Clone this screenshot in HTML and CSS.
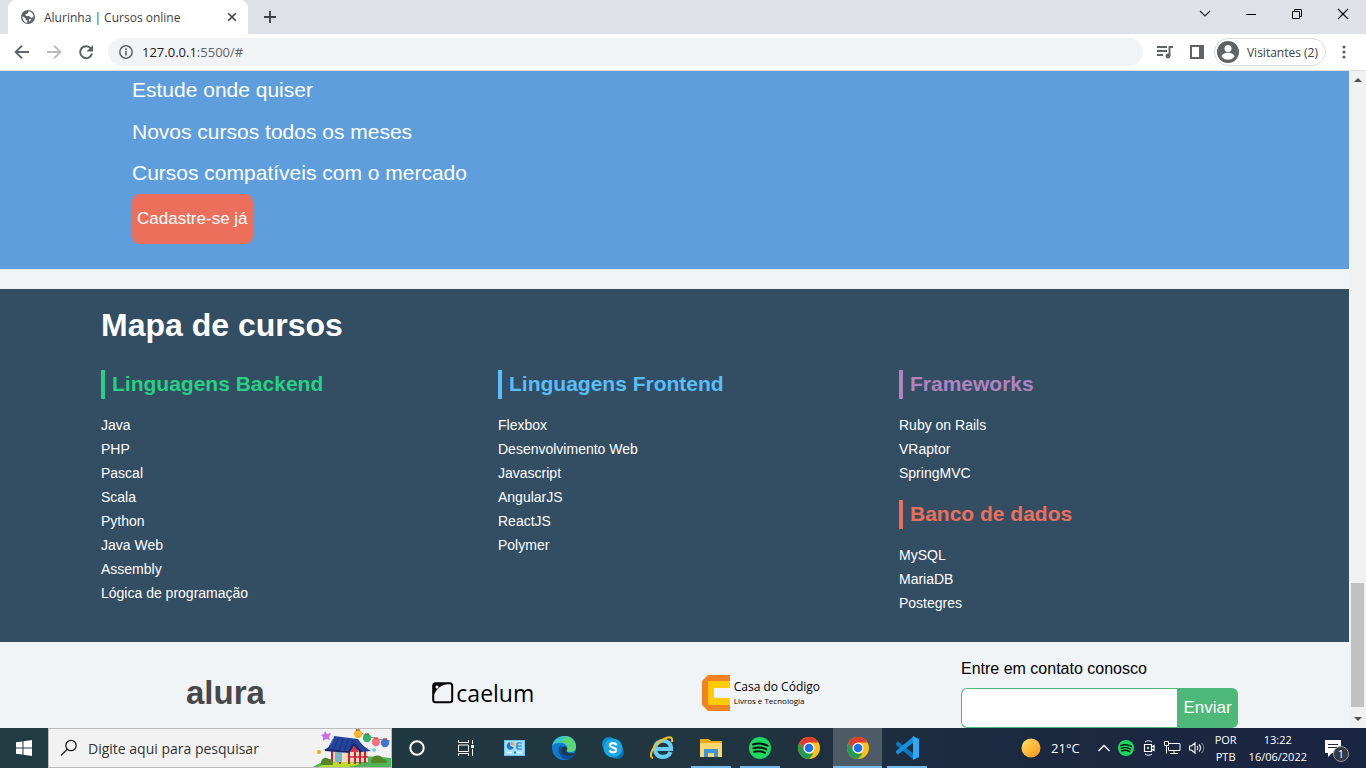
FILE: index.html
```html
<!DOCTYPE html>
<html lang="pt-br">
<head>
<meta charset="utf-8">
<meta name="viewport" content="width=device-width, initial-scale=1">
<title>Alurinha | Cursos online</title>
<link rel="stylesheet" href="styles.css">
</head>
<body class="desktop">
<header class="browser">
  <div class="tabstrip">
    <div class="tab">
      <svg class="tab-icon" width="16" height="16" viewBox="0 0 16 16"><circle cx="8" cy="8" r="7" fill="#5f6368"/><path d="M2.400 7.200 5.600 9.300v1.500l1.700 1v2C4.500 13.500 2.300 11 2.400 7.200zM8.600 2.200l-1 2.300-2 .8.2 1.700h3.300l1.500 1.600 1.700.2 1.300-1.500C13.400 4.600 11.400 2.500 8.600 2.200zM9.700 9.800l-1 1.400.8 1.200 1.900-1.600z" fill="#fff"/></svg>
      <span class="tab-title">Alurinha | Cursos online</span>
      <button class="icon-btn tab-close" aria-label="Fechar guia"><svg width="10" height="10" viewBox="0 0 10 10"><path d="M1.200 1.200l7.600 7.600M8.800 1.200 1.200 8.800" stroke="#3c4043" stroke-width="1.600"/></svg></button>
    </div>
    <button class="icon-btn new-tab" aria-label="Nova guia"><svg width="14" height="14" viewBox="0 0 14 14"><path d="M7 1v12M1 7h12" stroke="#3c4043" stroke-width="1.800"/></svg></button>
    <div class="window-buttons">
      <button class="icon-btn window-btn" aria-label="Pesquisar guias"><svg width="12" height="12" viewBox="0 0 12 12"><path d="M1 3l5 5 5-5" fill="none" stroke="#222" stroke-width="1.100"/></svg></button>
      <button class="icon-btn window-btn" aria-label="Minimizar"><svg width="12" height="12" viewBox="0 0 12 12"><path d="M1 6.500h10" stroke="#000"/></svg></button>
      <button class="icon-btn window-btn" aria-label="Restaurar"><svg width="12" height="12" viewBox="0 0 12 12"><path d="M1.500 3.500h7v7h-7zM3.500 3.500v-2h7v7h-2" fill="none" stroke="#000"/></svg></button>
      <button class="icon-btn window-btn" aria-label="Fechar"><svg width="12" height="12" viewBox="0 0 12 12"><path d="M1 1l10 10M11 1 1 11" stroke="#000" stroke-width="1.100"/></svg></button>
    </div>
  </div>
  <div class="toolbar">
    <button class="icon-btn" aria-label="Voltar"><svg width="16" height="16" viewBox="0 0 16 16"><path d="M15 8H2M8 1.600 1.600 8 8 14.400" fill="none" stroke="#5f6368" stroke-width="1.900"/></svg></button>
    <button class="icon-btn" aria-label="Avançar"><svg width="16" height="16" viewBox="0 0 16 16"><path d="M1 8h13M8 1.600 14.400 8 8 14.400" fill="none" stroke="#bababc" stroke-width="1.900"/></svg></button>
    <button class="icon-btn" aria-label="Atualizar"><svg width="16" height="16" viewBox="0 0 16 16"><path d="M13 4.600A6 6 0 1 0 14 9.500" fill="none" stroke="#5f6368" stroke-width="2"/><path d="M15 1v6.500H8.500z" fill="#5f6368"/></svg></button>
    <label class="address">
      <svg width="16" height="16" viewBox="0 0 16 16"><circle cx="8" cy="8" r="6.200" fill="none" stroke="#5f6368" stroke-width="1.500"/><path d="M8 7v4.500M8 4.300v1.700" stroke="#5f6368" stroke-width="1.600"/></svg>
      <span class="url">127.0.0.1<span class="url-rest">:5500/#</span></span>
    </label>
    <button class="icon-btn media" aria-label="Controles de mídia"><svg width="18" height="16" viewBox="0 0 18 16"><path d="M1 3h10M1 7h10M1 11h6" stroke="#5f6368" stroke-width="1.800"/><path d="M13.500 12V3h3.500" fill="none" stroke="#5f6368" stroke-width="1.900"/><circle cx="12" cy="12" r="2.400" fill="#5f6368"/></svg></button>
    <button class="icon-btn panel" aria-label="Painel lateral"><svg width="14" height="14" viewBox="0 0 14 14"><path d="M1 1h12v12H1z" fill="none" stroke="#5f6368" stroke-width="2"/><path d="M9 1h4v12H9z" fill="#5f6368"/></svg></button>
    <button class="profile"><svg width="22" height="22" viewBox="0 0 22 22"><circle cx="11" cy="11" r="11" fill="#5f6368"/><circle cx="11" cy="7.500" r="3.500" fill="#fff"/><path d="M4.500 15.500c1-5 12-5 13 0-3 4.300-10 4.300-13 0z" fill="#fff"/></svg><span>Visitantes (2)</span></button>
    <button class="icon-btn" aria-label="Menu"><svg width="4" height="14" viewBox="0 0 4 14"><g fill="#5f6368"><circle cx="2" cy="2" r="1.600"/><circle cx="2" cy="7" r="1.600"/><circle cx="2" cy="12" r="1.600"/></g></svg></button>
  </div>
</header>

<div class="viewport">
  <main class="page">
    <section class="hero">
      <ul class="benefits">
        <li>Estude onde quiser</li>
        <li>Novos cursos todos os meses</li>
        <li>Cursos compatíveis com o mercado</li>
      </ul>
      <button class="signup">Cadastre-se já</button>
    </section>
    <section class="map">
      <h1 class="map-title">Mapa de cursos</h1>
      <div class="map-columns">
        <div>
          <h2 class="category backend">Linguagens Backend</h2>
          <ul class="courses">
            <li><a href="#">Java</a></li><li><a href="#">PHP</a></li><li><a href="#">Pascal</a></li><li><a href="#">Scala</a></li><li><a href="#">Python</a></li><li><a href="#">Java Web</a></li><li><a href="#">Assembly</a></li><li><a href="#">Lógica de programação</a></li>
          </ul>
        </div>
        <div>
          <h2 class="category frontend">Linguagens Frontend</h2>
          <ul class="courses">
            <li><a href="#">Flexbox</a></li><li><a href="#">Desenvolvimento Web</a></li><li><a href="#">Javascript</a></li><li><a href="#">AngularJS</a></li><li><a href="#">ReactJS</a></li><li><a href="#">Polymer</a></li>
          </ul>
        </div>
        <div>
          <h2 class="category frameworks">Frameworks</h2>
          <ul class="courses">
            <li><a href="#">Ruby on Rails</a></li><li><a href="#">VRaptor</a></li><li><a href="#">SpringMVC</a></li>
          </ul>
          <h2 class="category database">Banco de dados</h2>
          <ul class="courses">
            <li><a href="#">MySQL</a></li><li><a href="#">MariaDB</a></li><li><a href="#">Postegres</a></li>
          </ul>
        </div>
      </div>
    </section>
    <footer class="footer">
      <nav class="partners">
        <a class="alura" href="#">alura</a>
        <a class="caelum" href="#"><svg width="22" height="22" viewBox="0 0 22 22"><rect x="1.200" y="1.200" width="19" height="19" rx="2.500" fill="none" stroke="#000" stroke-width="2"/><path d="M1.500 15C3 8 8 2.500 19 1.500H2z"/><circle cx="5" cy="5" r="1.500" fill="#fff"/></svg><span>caelum</span></a>
        <a class="casa" href="#"><svg width="28" height="36" viewBox="0 0 28 36"><path d="M6 0h22v36H6l-6-6V6z" fill="#f58220"/><path d="M6 6h22v24H6z" fill="#ffcb05"/><path d="M12 13h16v10H12z" fill="#f1f4f7"/></svg><span class="casa-text"><span class="casa-name">Casa do Código</span><span class="casa-sub">Livros e Tecnologia</span></span></a>
      </nav>
      <form class="contact">
        <label for="email">Entre em contato conosco</label>
        <div class="contact-row"><input id="email" type="email"><button type="button">Enviar</button></div>
      </form>
    </footer>
  </main>
  <div class="scrollbar" aria-hidden="true">
    <svg width="17" height="17" viewBox="0 0 17 17"><path d="M5 11h8L9 7z" fill="#505050"/></svg>
    <div class="track"><div class="thumb"></div></div>
    <svg width="17" height="17" viewBox="0 0 17 17"><path d="M5 6h8l-4 4z" fill="#505050"/></svg>
  </div>
</div>

<div class="taskbar">
  <button class="task start" aria-label="Iniciar"><svg width="16" height="16" viewBox="0 0 16 16"><path d="M0 2.300 6.500 1.400V7.500H0zM7.500 1.200 16 0v7.500H7.500zM0 8.500h6.500v6.100L0 13.700zM7.500 8.500H16V16l-8.500-1.200z" fill="#fff"/></svg></button>
  <label class="search">
    <svg class="search-icon" width="18" height="18" viewBox="0 0 18 18"><circle cx="11" cy="6.500" r="5.200" fill="none" stroke="#222" stroke-width="1.300"/><path d="M7.300 10.200 1 16.500" stroke="#222" stroke-width="1.300"/></svg>
    <input type="text" placeholder="Digite aqui para pesquisar" aria-label="Pesquisar">
    <svg class="search-art" width="78" height="38" viewBox="0 0 78 38">
      <path d="M0 38c10-6 18-9 29-8 14-4 30-3 49-1v9z" fill="#4fb457"/><path d="M5 38c10-5 30-7 43-3l-12 3z" fill="#b7dd2b"/>
      <path d="M12 2l2 3 4-1-2 4 1 3-4-1-3 2 0-4-2-2 3-1z" fill="#ca70ee"/>
      <path d="M19 18h36v15H19z" fill="#f7d6bd"/><path d="M19 17v17M27 17v18M36 17v18M42 17v18M47 20v15M52 19v15M19 20h35" stroke="#c6213a" stroke-width="2"/><path d="M22 23h7v10h-7z" fill="#73b8cb"/>
      <path d="M37 28h18" stroke="#c6213a" stroke-width="1.500"/>
      <path d="M11 21c6-3 9-8 10-14l24 3c3 5 7 9 13 12l-10 1-7-6-4 5z" fill="#24439a"/><path d="M12 21l24 2 5-8 7 8" fill="none" stroke="#182968" stroke-width="2"/><path d="M20 10l-5 10M25 10l-5 11M30 10l-4 12M35 11l-4 11M40 11l-4 11" stroke="#18307a" stroke-width=".8"/><path d="M37 23l4-6 5 6z" fill="#dd3648"/>
      <path d="M8 34c0-4 4-7 8-4 3 0 4 3 4 6H8zM58 33c0-8 11-8 12-3 3 0 4 2 4 4H58z" fill="#55852b"/>
      <path d="M43 0c9 8 20 10 34 12" fill="none" stroke="#888" stroke-width="1"/><circle cx="45" cy="5" r="4.200" fill="#ffb52e"/><circle cx="54" cy="9" r="4.200" fill="#2db36c"/><circle cx="63" cy="13" r="4.200" fill="#f5727d"/><circle cx="72" cy="14" r="4.200" fill="#3c77cf"/><path d="M43 1h4M52 5h4M61 9h4M70 10h4" stroke="#b12931" stroke-width="1.200"/><circle cx="6" cy="23" r="2" fill="#ffa800"/><circle cx="61" cy="21" r="2" fill="#6cd1ee"/>
    </svg>
  </label>
  <div class="apps">
    <button class="task" aria-label="Cortana"><svg width="16" height="16" viewBox="0 0 16 16"><circle cx="8" cy="8" r="6.700" fill="none" stroke="#fff" stroke-width="2"/></svg></button>
    <button class="task" aria-label="Visão de tarefas"><svg width="16" height="16" viewBox="0 0 16 16"><path d="M.5 0v2.500h10V0M.5 16v-2.500h10V16M.5 5h10v6.500H.5zM14.500 0v4M14.500 9v7" fill="none" stroke="#fff"/><path d="M13 5h3v3h-3z" fill="#fff"/></svg></button>
    <button class="task" aria-label="Painel"><svg width="21" height="16" viewBox="0 0 21 16"><path d="M0 0h21v16H0z" fill="#6fc7f4"/><path d="M1 1h19v14H1z" fill="#a3def9"/><circle cx="6.500" cy="6" r="3.600" fill="#fff"/><path d="M6.500 6V2.300A3.700 3.700 0 1 0 10 7z" fill="#1e78c8"/><path d="M7 5.500V2a3.500 3.500 0 0 1 3.300 3.500z" fill="#f4a024"/><path d="M13 3h5M13 6h5M13 9h5M13 3v6" stroke="#187ac5" stroke-width="1.200"/><path d="M3 12.500h5M13 12.500h5" stroke="#e9f8ff" stroke-width="1.500"/><path d="M10 11.500h2v2h-2z" fill="#187ac5"/></svg></button>
    <button class="task" aria-label="Edge"><svg width="24" height="24" viewBox="0 0 24 24"><circle cx="12" cy="12" r="12" fill="#127bd1"/><path d="M.2 10C2-3 23-4 24 10c.3 6-5 7-9 5.500-1-.6 1-1.500.5-4C14 6 4 5 .2 10z" fill="#38c6d2"/><path d="M14 .3C21 1 24 7 24 10.500c0 5.500-6 6-9 4.800-1-.6 1-1.500.5-4C15 8 11 6 8 6z" fill="#59d477"/><path d="M9 9C4 12 7 24 16 23.300c3-.8 5.500-3 6.500-5.300C17 20 8.500 18 9 11z" fill="#0b4e9c"/><path d="M10 11c-2 3 0 8 5 8.500 4 .5 7-1 7.500-1.500 1-1.300.5-1.500-.5-1-3 1-6 .5-8-2 3-1.500 0-6-4-4z" fill="#203740"/></svg></button>
    <button class="task" aria-label="Skype"><svg width="22" height="22" viewBox="0 0 22 22"><circle cx="7" cy="7" r="7" fill="#0a8bd3"/><circle cx="15" cy="15" r="7" fill="#0871b9"/><circle cx="11" cy="11" r="9.500" fill="#18a6e5"/><path d="M14.300 8.300c-.8-3-6.500-2.600-6.400 0 .1 3 6.500 1.700 6.300 4.900-.2 2.700-6 2.800-6.600-.2" fill="none" stroke="#fff" stroke-width="2.200"/></svg></button>
    <button class="task" aria-label="Internet Explorer"><svg width="24" height="24" viewBox="0 0 24 24"><path d="M5 13h16c.5-11-16-11-16 0 0 10 13 10 15.500 3" fill="none" stroke="#66ccf8" stroke-width="4.200"/><path d="M3 22c-6-2 2-15 11-19 6-3 9-2 8 3" fill="none" stroke="#f3c226" stroke-width="2"/></svg></button>
    <button class="task open" aria-label="Explorador"><svg width="22" height="20" viewBox="0 0 22 20"><path d="M0 1h9l2 2h11v16H0z" fill="#e9a91c"/><path d="M0 5h22v14H0z" fill="#ffd66e"/><path d="M4 19v-8h14v8h-4v-4H8v4z" fill="#3c94d8"/></svg></button>
    <button class="task open" aria-label="Spotify"><svg width="22" height="22" viewBox="0 0 22 22"><circle cx="11" cy="11" r="11" fill="#1ed760"/><path d="M4 7.500c5-1.500 10-1 14.500 1.200M4.500 11.200c4.500-1.200 9-.8 12.700 1.200M5 14.700c4-1 7.500-.6 11 1.100" fill="none" stroke="#111" stroke-width="2" stroke-linecap="round"/></svg></button>
    <button class="task" aria-label="Chrome"><svg width="22" height="22" viewBox="0 0 22 22"><circle cx="11" cy="11" r="11" fill="#fbc116"/><path d="M1.500 5.500A11 11 0 0 1 20.500 5.500H11L6.200 13.700z" fill="#e33b2e"/><path d="M1.500 5.500 6.200 13.700 11 16.500h4.700L11 22A11 11 0 0 1 1.500 5.500z" fill="#219b51"/><circle cx="11" cy="11" r="5.500" fill="#fff"/><circle cx="11" cy="11" r="4.300" fill="#1a73e8"/></svg></button>
    <button class="task open active" aria-label="Chrome aberto"><svg width="22" height="22" viewBox="0 0 22 22"><circle cx="11" cy="11" r="11" fill="#fbc116"/><path d="M1.500 5.500A11 11 0 0 1 20.500 5.500H11L6.200 13.700z" fill="#e33b2e"/><path d="M1.500 5.500 6.200 13.700 11 16.500h4.700L11 22A11 11 0 0 1 1.500 5.500z" fill="#219b51"/><circle cx="11" cy="11" r="5.500" fill="#fff"/><circle cx="11" cy="11" r="4.300" fill="#1a73e8"/></svg></button>
    <button class="task open" aria-label="VS Code"><svg width="24" height="24" viewBox="0 0 24 24"><path d="M1 7 3 5.500 19 18v6L1 9z" fill="#0a78c4"/><path d="M1 17 3 18.500 19 6V0L1 15z" fill="#168fdc"/><path d="M18 0l6 3v18l-6 3z" fill="#32a8f2"/></svg></button>
  </div>
  <div class="tray">
    <svg width="20" height="20" viewBox="0 0 20 20"><defs><linearGradient id="sun" x1="0" y1="0" x2="1" y2="1"><stop stop-color="#ffdf65"/><stop offset="1" stop-color="#ff9416"/></linearGradient></defs><circle cx="10" cy="10" r="9.500" fill="url(#sun)"/></svg>
    <span class="temp">21°C</span>
    <svg width="12" height="8" viewBox="0 0 12 8"><path d="M.5 7 6 1.500 11.500 7" fill="none" stroke="#fff" stroke-width="1.300"/></svg>
    <svg width="16" height="16" viewBox="0 0 22 22"><circle cx="11" cy="11" r="11" fill="#1ed760"/><path d="M4 7.500c5-1.500 10-1 14.500 1.200M4.500 11.200c4.500-1.200 9-.8 12.700 1.200M5 14.700c4-1 7.500-.6 11 1.100" fill="none" stroke="#111" stroke-width="2" stroke-linecap="round"/></svg>
    <svg width="14" height="16" viewBox="0 0 14 16"><path d="M3 2C5 .3 8 .3 10 2M3 14c2 1.700 5 1.700 7 0" fill="none" stroke="#fff"/><path d="M2.500 4.500h7v7h-7zM9.500 7l2.500-1.500v5L9.500 9" fill="none" stroke="#fff" stroke-width="1.200"/><circle cx="6" cy="8" r="1" fill="#fff"/></svg>
    <svg width="17" height="14" viewBox="0 0 17 14"><path d="M5 2.500h11v7H4.500V6M10 9.500v3M6 12.500h8M.5.500h4v4h-4zM2.500 4.500v8" fill="none" stroke="#fff"/></svg>
    <svg width="16" height="14" viewBox="0 0 16 14"><path d="M.5 5h2L6 2v10L2.500 9h-2zM8 5c1 1 1 3 0 4M10 3.500c2 2 2 5 0 7" fill="none" stroke="#fff" stroke-width="1.100"/><path d="M12.500 2c3 3 3 7 0 10" fill="none" stroke="#899" stroke-width="1"/></svg>
    <span class="two-line lang"><span>POR</span><span>PTB</span></span>
    <span class="two-line clock"><span>13:22</span><span>16/06/2022</span></span>
    <span class="notify"><svg width="16" height="17" viewBox="0 0 16 17"><path d="M0 0h16v13H7l-4 4v-4H0z" fill="#fff"/><path d="M3 4.500h10M3 7.500h10" stroke="#1a2940"/></svg><span class="badge">1</span></span>
  </div>
</div>
</body>
</html>
```

FILE: styles.css
```css
* { box-sizing: border-box; }
body, h1, h2, ul { margin: 0; padding: 0; }
ul { list-style: none; }
a { color: inherit; text-decoration: none; }
button, input { font: inherit; border: 0; padding: 0; margin: 0; }
svg { display: block; flex: none; }

.desktop { height: 100vh; overflow: hidden; display: flex; flex-direction: column; font-family: "Liberation Sans", Arial, sans-serif; background: #f1f4f7; }

/* Browser chrome */
.browser { flex: none; font-family: "Open Sans", "Noto Sans", sans-serif; font-size: 12px; color: #3c4043; border-bottom: 1px solid #dadce0; }
.icon-btn { display: flex; align-items: center; justify-content: center; background: none; }
.tabstrip { display: flex; height: 34px; background: #dee1e6; padding-left: 8px; }
.tab { display: flex; align-items: center; width: 240px; padding: 0 11px 0 12px; background: #fff; border-radius: 8px 8px 0 0; }
.tab-title { flex: 1; margin-left: 8px; white-space: nowrap; }
.new-tab { width: 44px; }
.window-buttons { display: flex; margin-left: auto; height: 28px; }
.window-btn { width: 46px; }
.toolbar { display: flex; align-items: center; height: 36px; padding: 0 20px 0 14px; gap: 16px; background: #fff; }
.address { flex: 1; display: flex; align-items: center; gap: 8px; height: 28px; margin-left: -2px; padding: 0 10px; background: #f1f3f4; border-radius: 14px; }
.url { font-size: 13px; color: #202124; }
.url-rest { color: #5f6368; }
.media { margin-left: -3px; }
.profile { display: flex; align-items: center; gap: 8px; height: 28px; margin-left: -6px; padding: 0 7px 0 2px; background: #fff; border: 1px solid #dadce0; border-radius: 14px; color: #3c4043; white-space: nowrap; }

/* Page */
.viewport { flex: 1; min-height: 0; display: flex; }
.page { flex: 1; min-width: 0; overflow: hidden; color: #fff; }
.hero { padding: 0 132px 25px; background: #5e9edd; }
.benefits { font-size: 21px; }
.benefits li { line-height: 24px; padding: 7px 0 11px; }
.benefits li:last-child { padding: 6px 0 9px; }
.signup { height: 50px; padding: 0 5px; background: #ec6f5c; color: #fff; font-size: 17px; border-radius: 8px; }
.map { margin-top: 20px; padding: 16px 101px 12px; background: #334d63; }
.map-title { font-size: 32px; line-height: 40px; }
.map-columns { display: grid; grid-template-columns: 397fr 401fr 349fr; margin-top: 25px; }
.category { font-size: 21px; line-height: 27px; padding: 0 0 2px 7px; border-left: 4px solid; }
.backend { color: #27d183; }
.frontend { color: #59bffc; }
.frameworks { color: #af84c1; }
.database { color: #ec6f5c; }
.courses { padding: 14px 0 15px; font-size: 14px; line-height: 24px; }
.footer { display: flex; align-items: flex-start; gap: 141px; padding: 16px 111px 0 186px; color: #000; }
.partners { flex: 1; display: flex; align-items: center; justify-content: space-between; height: 70px; }
.alura { color: #484848; font: bold 33px/40px "Liberation Sans", sans-serif; }
.caelum { display: flex; align-items: center; gap: 2px; font: 23px/24px "Open Sans", sans-serif; }
.casa { display: flex; align-items: center; gap: 4px; }
.casa-text { display: flex; flex-direction: column; font-family: "Open Sans", sans-serif; white-space: nowrap; }
.casa-name { font-size: 12px; line-height: 16px; }
.casa-sub { font-size: 8px; line-height: 12px; }
.contact { display: flex; flex-direction: column; gap: 8px; width: 277px; font-size: 16px; line-height: 22px; }
.contact-row { display: flex; height: 40px; font-size: 17px; }
.contact input { flex: 1; min-width: 0; background: #fff; border: 1px solid #4db87a; border-right: 0; border-radius: 6px 0 0 6px; }
.contact button { width: 61px; background: #4db87a; color: #fff; border-radius: 0 6px 6px 0; }
.scrollbar { width: 17px; flex: none; display: flex; flex-direction: column; background: #f1f1f1; }
.track { flex: 1; display: flex; align-items: flex-end; padding: 0 2px 4px; }
.thumb { flex: 1; height: 20%; background: #c1c1c1; }

/* Taskbar */
.taskbar { flex: none; display: flex; height: 40px; color: #fff; font-family: "Open Sans", "Noto Sans", sans-serif; background: linear-gradient(90deg, #203b42, #213640 50%, #1b2940 75%, #1a2541); }
.task { display: flex; align-items: center; justify-content: center; width: 49px; background: none; }
.start { width: 48px; }
.search { display: flex; align-items: center; width: 344px; background: #f2f2f2; border: 1px solid #bcbcbc; padding-left: 11px; }
.search input { flex: 1; min-width: 0; margin-left: 10px; background: none; font-size: 14px; }
.search input::placeholder { color: #333; opacity: 1; }
.search-art { align-self: flex-end; }
.apps { display: flex; }
.task.open { background: linear-gradient(#76b9ed, #76b9ed) bottom / 40px 2px no-repeat; }
.task.active { background: linear-gradient(#76b9ed, #76b9ed) bottom / 100% 2px no-repeat #4d5b66; }
.tray { display: flex; align-items: center; gap: 8px; margin-left: auto; padding-right: 25px; font-size: 12px; }
.temp { font-size: 13px; margin: 0 10px 0 2px; }
.two-line { display: flex; flex-direction: column; align-items: center; line-height: 17px; font-size: 11px; }
.lang { margin-left: 2px; }
.clock { margin: 0 10px 0 4px; }
.notify { position: relative; }
.badge { position: absolute; left: 8px; top: 6px; width: 16px; height: 16px; border-radius: 8px; background: #333a45; border: 1px solid #999; font-size: 11px; line-height: 14px; text-align: center; }
```
